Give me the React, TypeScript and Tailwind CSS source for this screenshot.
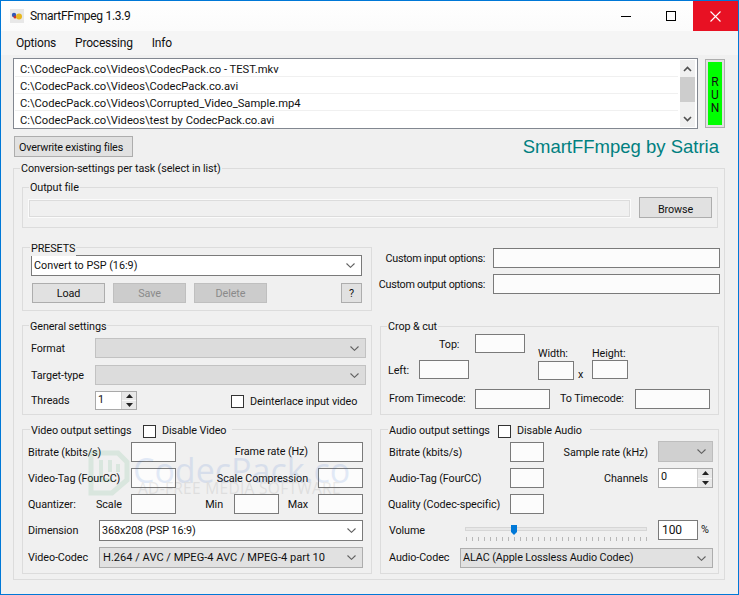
import React from "react";

const Chevron = () => (
  <svg width="9" height="5" viewBox="0 0 9 5" className="shrink-0 mr-[1px]">
    <polyline points="0.5,0.5 4.5,4.3 8.5,0.5" fill="none" stroke="#606060" strokeWidth="1.1" />
  </svg>
);

const Field = ({ className = "", children }: { className?: string; children?: React.ReactNode }) => (
  <div className={`shrink-0 bg-[#fcfcfc] border border-[#7a7a7a] ${className}`}>{children}</div>
);

const Btn = ({ children, className = "" }: { children: React.ReactNode; className?: string }) => (
  <div className={`shrink-0 flex items-center justify-center whitespace-nowrap border border-[#adadad] ${className}`}>{children}</div>
);

const Combo = ({ text, className = "" }: { text?: string; className?: string }) => (
  <div className={`shrink-0 flex items-center justify-between whitespace-nowrap pl-[2px] pr-[5px] border ${className}`}>
    <span>{text}</span>
    <Chevron />
  </div>
);

const Spin = ({ value, className = "" }: { value: string; className?: string }) => (
  <div className={`shrink-0 flex bg-white border border-[#a9a9a9] ${className}`}>
    <span className="flex-1 pl-[2px] leading-[16px]">{value}</span>
    <div className="w-[15px] flex flex-col bg-[#e8e8e8] border-l border-[#d0d0d0]">
      <div className="flex-1 flex items-center justify-center border-b border-[#f8f8f8]">
        <svg width="7" height="4" viewBox="0 0 7 4"><polygon points="3.5,0 7,4 0,4" fill="#222" /></svg>
      </div>
      <div className="flex-1 flex items-center justify-center">
        <svg width="7" height="4" viewBox="0 0 7 4"><polygon points="0,0 7,0 3.5,4" fill="#222" /></svg>
      </div>
    </div>
  </div>
);

const Check = ({ className = "" }: { className?: string }) => (
  <div className={`shrink-0 w-[13px] h-[13px] bg-white border border-[#333] ${className}`} />
);

const Legend = ({ children, className = "" }: { children: React.ReactNode; className?: string }) => (
  <div className={`absolute flex items-center h-[14px] bg-[#f0f0f0] whitespace-nowrap ${className}`}>{children}</div>
);

const Group = ({ children, className = "" }: { children: React.ReactNode; className?: string }) => (
  <div className={`relative shrink-0 border border-[#dcdcdc] ${className}`}>{children}</div>
);

/* label sitting one pixel below the centre of its row, as in the original form */
const L = ({ children, className = "" }: { children: React.ReactNode; className?: string }) => (
  <span className={`pt-[2px] whitespace-nowrap ${className}`}>{children}</span>
);

const GrayCombo = "bg-[#e1e1e1] border-[#adadad]";
const WhiteCombo = "bg-white border-[#7a7a7a]";
const OffCombo = "bg-[#dcdcdc] border-[#c2c2c2]";
const files = [
  "C:\\CodecPack.co\\Videos\\CodecPack.co - TEST.mkv",
  "C:\\CodecPack.co\\Videos\\CodecPack.co.avi",
  "C:\\CodecPack.co\\Videos\\Corrupted_Video_Sample.mp4",
  "C:\\CodecPack.co\\Videos\\test by CodecPack.co.avi",
];
const ticks = Array.from({ length: 31 }, (_, i) => 1 + i * 6);

export default function App() {
  return (
    <div className="relative w-[739px] h-[595px] overflow-hidden border border-[#0078d7] bg-[#f0f0f0] text-[10.8px] tracking-[-0.1px] leading-[14px] text-[#111] font-['Roboto',sans-serif]">
      {/* title bar */}
      <div className="flex h-[30px] bg-gradient-to-b from-white to-[#fbfbfb]">
        <div className="ml-[9px] mt-[8px] w-[14px] h-[14px] bg-[#e8e8e8]">
          <svg width="14" height="14" viewBox="0 0 14 14">
            <circle cx="4" cy="6" r="2.2" fill="#3158b8" />
            <circle cx="5" cy="8" r="1.5" fill="#c8352c" />
            <circle cx="9" cy="7.5" r="3" fill="#e8b820" />
          </svg>
        </div>
        <span className="ml-[6px] mt-[7px] text-[12px] tracking-[-0.3px] leading-[17px] text-[#111]">SmartFFmpeg 1.3.9</span>
        <div className="ml-auto flex">
          <div className="w-[45px] flex items-center justify-center">
            <div className="w-[10px] h-[1px] bg-black" />
          </div>
          <div className="w-[45px] flex items-center justify-center">
            <div className="w-[10px] h-[10px] border border-black" />
          </div>
          <div className="w-[45px] flex items-center justify-center bg-[#e81123]">
            <svg width="11" height="11" viewBox="0 0 11 11">
              <path d="M0.5 0.5 L10.5 10.5 M10.5 0.5 L0.5 10.5" stroke="#fff" strokeWidth="1.1" />
            </svg>
          </div>
        </div>
      </div>
      {/* menu */}
      <div className="flex items-center h-[24px] bg-[#f5f5f5] pl-[15px] gap-[19px] text-[12px] tracking-[-0.2px]">
        <span>Options</span>
        <span>Processing</span>
        <span>Info</span>
      </div>
      {/* client */}
      <div className="pl-[12px]">
        <div className="flex mt-[3px]">
          <div className="flex w-[685px] h-[71px] bg-white border border-[#828790]">
            <div className="flex-1 flex flex-col pt-[1px] pl-[1px]">
              {files.map((f, i) => (
                <div key={f} className={`h-[17px] pl-[5px] leading-[20px] whitespace-nowrap text-[11.2px] tracking-[0px] ${i < 3 ? "border-b border-[#f0f0f0]" : ""}`}>{f}</div>
              ))}
            </div>
            <div className="w-[15px] mx-[2px] my-[1px] flex flex-col bg-[#f0f0f0]">
              <div className="h-[17px] flex items-center justify-center">
                <svg width="9" height="6" viewBox="0 0 9 6"><polyline points="1,5 4.5,1.5 8,5" fill="none" stroke="#505050" strokeWidth="1.6" /></svg>
              </div>
              <div className="h-[25px] bg-[#cdcdcd]" />
              <div className="flex-1" />
              <div className="h-[17px] flex items-center justify-center">
                <svg width="9" height="6" viewBox="0 0 9 6"><polyline points="1,1 4.5,4.5 8,1" fill="none" stroke="#505050" strokeWidth="1.6" /></svg>
              </div>
            </div>
          </div>
          <div className="ml-[7px] mt-[1px] w-[20px] h-[69px] border border-[#adadad] bg-[#e1e1e1] p-[2px]">
            <div className="h-full bg-[#00ff00] flex flex-col items-center justify-center leading-[13px] text-[12px] tracking-[0px] text-[#111] pt-[3px]">
              <span>R</span>
              <span>U</span>
              <span>N</span>
            </div>
          </div>
        </div>

        <div className="flex items-center mt-[7px] h-[21px] w-[706px]">
          <Btn className="ml-[1px] w-[119px] h-[21px] bg-[#e1e1e1] pt-[2px] pr-[5px] tracking-[-0.2px]">Overwrite existing files</Btn>
          <span className="ml-auto text-[18.5px] tracking-[0px] leading-[22px] text-[#008080] font-['Liberation_Sans',sans-serif]">SmartFFmpeg by Satria</span>
        </div>

        {/* outer group */}
        <Group className="mt-[11px] w-[712px] h-[412px]">
          <Legend className="left-[6px] top-[-7px] px-[1px]">Conversion-settings per task (select in list)</Legend>
          <Group className="ml-[8px] mt-[18px] w-[696px] h-[41px]">
            <Legend className="left-[6px] top-[-7px] px-[1px]">Output file</Legend>
            <div className="flex">
              <div className="ml-[5px] mt-[11px] w-[603px] h-[19px] bg-[#f0f0f0] border border-[#fbfbfb] outline outline-[#dcdcdc] outline-offset-[-2px]" />
              <Btn className="ml-[8px] mt-[9px] w-[73px] h-[21px] bg-[#e1e1e1] pt-[4px]">Browse</Btn>
            </div>
          </Group>

          <div className="flex ml-[8px] mt-[19px]">
            <Group className="w-[350px] h-[64px]">
              <Legend className="left-[7px] top-[-6px] px-[1px]">PRESETS</Legend>
              <Combo text="Convert to PSP (16:9)" className={`ml-[8px] mt-[7px] w-[331px] h-[21px] tracking-[0px] ${WhiteCombo}`} />
              <div className="flex ml-[9px] mt-[7px]">
                <Btn className="w-[73px] h-[20px] bg-[#e1e1e1] pt-[2px]">Load</Btn>
                <Btn className="ml-[8px] w-[73px] h-[20px] pt-[2px] bg-[#cccccc] border-[#bfbfbf] text-[#8a8a8a]">Save</Btn>
                <Btn className="ml-[8px] w-[73px] h-[20px] pt-[2px] bg-[#cccccc] border-[#bfbfbf] text-[#8a8a8a]">Delete</Btn>
                <Btn className="ml-[74px] w-[21px] h-[20px] pt-[2px] bg-[#e1e1e1]">?</Btn>
              </div>
            </Group>
            <div className="flex flex-col gap-[6px] mt-[1px]">
              <div className="flex items-center">
                <L className="w-[113px] text-right tracking-[-0.3px]">Custom input options:</L>
                <Field className="ml-[8px] w-[227px] h-[20px]" />
              </div>
              <div className="flex items-center">
                <L className="w-[113px] text-right tracking-[-0.3px]">Custom output options:</L>
                <Field className="ml-[8px] w-[227px] h-[20px]" />
              </div>
            </div>
          </div>

          <div className="flex ml-[8px] mt-[14px]">
            <Group className="w-[350px] h-[90px]">
              <Legend className="left-[6px] top-[-6px] px-[1px]">General settings</Legend>
              <div className="flex items-center mt-[12px] ml-[8px]">
                <L className="w-[64px]">Format</L>
                <Combo className={`w-[271px] h-[20px] ${OffCombo}`} />
              </div>
              <div className="flex items-center mt-[7px] ml-[8px]">
                <L className="w-[64px]">Target-type</L>
                <Combo className={`w-[271px] h-[20px] ${OffCombo}`} />
              </div>
              <div className="flex items-center mt-[6px] ml-[8px]">
                <span className="w-[64px]">Threads</span>
                <Spin value="1" className="w-[42px] h-[19px]" />
                <Check className="ml-[94px] mt-[2px]" />
                <span className="ml-[6px] mt-[3px] whitespace-nowrap">Deinterlace input video</span>
              </div>
            </Group>
            <Group className="ml-[8px] mt-[1px] w-[339px] h-[89px]">
              <Legend className="left-[6px] top-[-7px] px-[1px]">Crop &amp; cut</Legend>
              <div className="flex">
                <div className="w-[157px]">
                  <div className="flex items-center mt-[7px]">
                    <L className="ml-[58px] w-[36px]">Top:</L>
                    <Field className="w-[50px] h-[19px]" />
                  </div>
                  <div className="flex items-center mt-[7px]">
                    <L className="ml-[7px] w-[31px]">Left:</L>
                    <Field className="w-[50px] h-[19px]" />
                  </div>
                </div>
                <div className="mt-[18px]">
                  <div className="flex h-[14px] pt-[2px]">
                    <span className="w-[54px]">Width:</span>
                    <span>Height:</span>
                  </div>
                  <div className="flex items-start mt-[1px]">
                    <Field className="mt-[1px] w-[36px] h-[19px]" />
                    <span className="w-[18px] mt-[8px] pl-[4px]">x</span>
                    <Field className="w-[36px] h-[19px]" />
                  </div>
                </div>
              </div>
              <div className="flex items-center mt-[7px] ml-[8px]">
                <span className="w-[86px] whitespace-nowrap">From Timecode:</span>
                <Field className="w-[75px] h-[20px]" />
                <span className="ml-[10px] w-[75px] whitespace-nowrap">To Timecode:</span>
                <Field className="w-[75px] h-[20px]" />
              </div>
            </Group>
          </div>

          <div className="flex ml-[8px] mt-[14px]">
            <Group className="w-[350px] h-[145px]">
              <Legend className="left-[7px] top-[-6px] w-[202px] pl-[1px]">
                <span className="w-[100px]">Video output settings</span>
                <Check className="ml-[12px]" />
                <span className="ml-[6px]">Disable Video</span>
              </Legend>
              <div className="flex items-center mt-[12px] ml-[5px]">
                <L className="w-[103px]">Bitrate (kbits/s)</L>
                <Field className="w-[45px] h-[20px]" />
                <span className="w-[132px] text-right whitespace-nowrap">Frame rate (Hz)</span>
                <Field className="ml-[10px] w-[45px] h-[20px]" />
              </div>
              <div className="flex items-center mt-[6px] ml-[5px]">
                <L className="w-[103px]">Video-Tag (FourCC)</L>
                <Field className="w-[45px] h-[20px]" />
                <L className="w-[132px] text-right">Scale Compression</L>
                <Field className="ml-[10px] w-[45px] h-[20px]" />
              </div>
              <div className="flex items-center mt-[6px] ml-[5px]">
                <L className="w-[68px]">Quantizer:</L>
                <L className="w-[35px]">Scale</L>
                <Field className="w-[45px] h-[20px]" />
                <L className="w-[58px] pr-[11px] text-right">Min</L>
                <Field className="w-[45px] h-[20px]" />
                <L className="w-[39px] pr-[10px] text-right">Max</L>
                <Field className="w-[45px] h-[20px]" />
              </div>
              <div className="flex items-center mt-[6px] ml-[5px]">
                <span className="w-[71px]">Dimension</span>
                <Combo text="368x208 (PSP 16:9)" className={`w-[264px] h-[21px] ${WhiteCombo}`} />
              </div>
              <div className="flex items-center mt-[6px] ml-[5px]">
                <span className="w-[71px]">Video-Codec</span>
                <Combo text="H.264 / AVC / MPEG-4 AVC / MPEG-4 part 10" className={`w-[264px] h-[21px] pl-[3px] text-[11.1px] tracking-[0px] ${GrayCombo}`} />
              </div>
            </Group>
            <Group className="ml-[8px] w-[339px] h-[145px]">
              <Legend className="left-[7px] top-[-6px] w-[202px] pl-[1px]">
                <span className="w-[100px]">Audio output settings</span>
                <Check className="ml-[9px]" />
                <span className="ml-[6px]">Disable Audio</span>
              </Legend>
              <div className="flex items-center mt-[12px] ml-[8px]">
                <L className="w-[121px]">Bitrate (kbits/s)</L>
                <Field className="w-[34px] h-[20px]" />
                <L className="w-[104px] text-right">Sample rate (kHz)</L>
                <Combo className="ml-[10px] w-[55px] h-[21px] -mt-[1px] bg-[#d0d0d0] border-[#bdbdbd]" />
              </div>
              <div className="flex items-center mt-[6px] ml-[8px]">
                <L className="w-[121px]">Audio-Tag (FourCC)</L>
                <Field className="w-[34px] h-[20px]" />
                <L className="w-[104px] text-right">Channels</L>
                <Spin value="0" className="ml-[10px] w-[55px] h-[20px]" />
              </div>
              <div className="flex items-center mt-[6px] ml-[8px]">
                <L className="w-[121px] -ml-[1px] pr-[1px]">Quality (Codec-specific)</L>
                <Field className="w-[34px] h-[20px] ml-[1px]" />
              </div>
              <div className="flex items-center mt-[6px] ml-[8px]">
                <L className="w-[76px]">Volume</L>
                <div className="relative w-[182px] h-[20px]">
                  <div className="mt-[7px] h-[4px] bg-[#e7e7e7] border border-[#d6d6d6]" />
                  <svg width="182" height="6" viewBox="0 0 182 6" className="mt-[5px]">
                    {ticks.map((x) => (
                      <line key={x} x1={x + 0.5} x2={x + 0.5} y1="1" y2="5" stroke="#b8b8b8" />
                    ))}
                  </svg>
                  <svg width="6" height="10" viewBox="0 0 6 10" className="absolute left-[46px] top-[5px]">
                    <polygon points="0,0 6,0 6,7 3,10 0,7" fill="#0078d7" />
                  </svg>
                </div>
                <Field className="ml-[11px] w-[40px] h-[20px] !bg-white pl-[3px] text-[12px] leading-[18px]">100</Field>
                <span className="ml-[3px]">%</span>
              </div>
              <div className="flex items-center mt-[8px] ml-[8px]">
                <span className="w-[71px]">Audio-Codec</span>
                <Combo text="ALAC (Apple Lossless Audio Codec)" className={`w-[253px] h-[20px] ${GrayCombo}`} />
              </div>
            </Group>
          </div>
        </Group>
      </div>

      {/* watermark */}
      <div className="absolute left-[87px] top-[449px] w-[250px] h-[50px] pointer-events-none opacity-[0.12] tracking-[0px]">
        <svg width="42" height="46" viewBox="0 0 42 46" className="absolute left-0 top-0">
          <path d="M3 3 H30 L39 12 V30 L24 43 H3 Z" fill="none" stroke="#3aa060" strokeWidth="5" />
          <path d="M13 10 V30 H24 M22 10 V22 M30 14 V22" fill="none" stroke="#3aa060" strokeWidth="4" />
        </svg>
        <span className="absolute left-[45px] top-[-1px] text-[34px] leading-[42px] text-[#2a66cc] whitespace-nowrap font-['Open_Sans',sans-serif]">CodecPack.co</span>
        <span className="absolute left-[50px] top-[29px] text-[15.5px] tracking-[0.3px] leading-[18px] text-[#666] whitespace-nowrap font-['Open_Sans',sans-serif]">AD-FREE MEDIA SOFTWARE</span>
      </div>
    </div>
  );
}
